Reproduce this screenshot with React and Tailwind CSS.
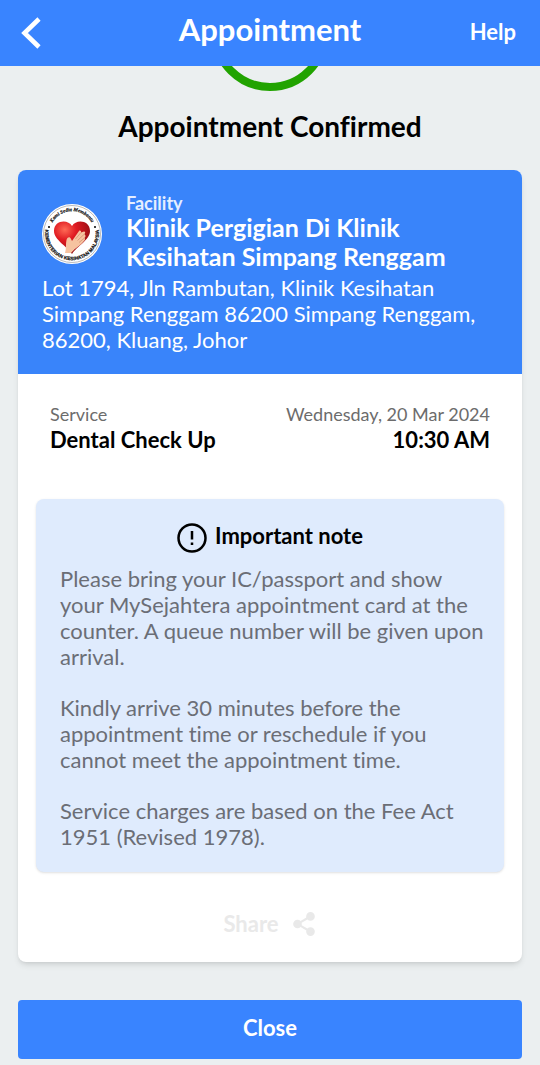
import { Share2 } from "lucide-react";

const notes = [
  "Please bring your IC/passport and show your MySejahtera appointment card at the counter. A queue number will be given upon arrival.",
  "Kindly arrive 30 minutes before the appointment time or reschedule if you cannot meet the appointment time.",
  "Service charges are based on the Fee Act 1951 (Revised 1978).",
];

function Logo() {
  return (
    <svg viewBox="0 0 60 60" className="mt-1 size-15 shrink-0" role="img" aria-label="Kementerian Kesihatan Malaysia">
      <defs>
        <radialGradient id="heart" cx="0.3" cy="0.25" r="0.9">
          <stop offset="0" stopColor="#ff6a55" />
          <stop offset="0.35" stopColor="#e01b22" />
          <stop offset="1" stopColor="#7d0a10" />
        </radialGradient>
        <path id="top" d="M8.5 23 A22.5 22.5 0 0 1 51.5 23" />
        <path id="bottom" d="M3.5 24 A27 27 0 1 0 56.5 24" />
      </defs>
      <circle cx="30" cy="30" r="30" fill="#fff" />
      <circle cx="30" cy="30" r="28.5" fill="none" stroke="#777" strokeWidth="0.5" />
      <g fill="#111" stroke="#111" strokeWidth="0.2" fontFamily="Liberation Sans, sans-serif" fontWeight="700" textAnchor="middle">
        <text fontSize="5" fontStyle="italic" fontFamily="Liberation Serif, serif">
          <textPath href="#top" startOffset="50%">Kami Sedia Membantu</textPath>
        </text>
        <text fontSize="4.9">
          <textPath href="#bottom" startOffset="50%">KEMENTERIAN KESIHATAN MALAYSIA</textPath>
        </text>
      </g>
      <circle cx="7" cy="23" r="1.1" fill="#111" />
      <circle cx="53" cy="23" r="1.1" fill="#111" />
      <path
        d="M30 50 C25 42 12 36 12 27 C12 16 26 15 30 22 C34 15 48 16 48 27 C48 36 35 42 30 50 Z"
        fill="url(#heart)"
      />
      <path
        d="M23 49 C24.5 44 23.5 40 24.5 36 C25 33 28 32 29 35 L30 37 L37 27 C38 26 39.5 27 39 28.5 L42 27.5 C43.5 27.5 43.5 29 42.5 30 L43 31 C44 31.5 43.5 33 42.5 34 C43.5 34.5 43 36 42 37 C38 42 34 43 29 49 Z"
        fill="#f6c3a0"
      />
      <path d="M39 28.5 L33.5 35 M42.5 30 L35.5 36.5 M42.5 34 L37 38.5" fill="none" stroke="#c98263" strokeWidth="0.6" />
    </svg>
  );
}

function App() {
  return (
    <div className="min-h-screen bg-[#ebeff0] font-['Lato',sans-serif] text-black [font-variant-ligatures:none]">
      <header className="sticky top-0 z-10 grid h-[66px] grid-cols-[1fr_auto_1fr] items-center bg-[#3984ff] px-5 pb-1 text-white">
        <button aria-label="Back" className="justify-self-start pt-1">
          <svg viewBox="0 0 22 34" className="h-[34px] w-[22px]" fill="none" stroke="currentColor" strokeWidth="4.6">
            <path d="M19 3 L4.5 17 L19 31" />
          </svg>
        </button>
        <h1 className="pb-1 text-[31px] font-bold leading-9">Appointment</h1>
        <a href="#" className="mr-1 justify-self-end text-[22px] font-bold">
          Help
        </a>
      </header>

      <main className="px-[18px] pb-1.5">
        <div className="flex h-[25px] items-end justify-center overflow-hidden">
          <div className="size-[118px] shrink-0 rounded-full border-8 border-[#21a300]"></div>
        </div>

        <h2 className="mt-[17px] text-center text-[28px] font-bold leading-9">Appointment Confirmed</h2>

        <section className="mt-[26px] overflow-hidden rounded-lg bg-white shadow-md">
          <div className="bg-[#3984fa] px-6 pb-[21px] pt-[23px] text-white">
            <div className="flex items-center gap-6">
              <Logo />
              <div>
                <p className="text-lg font-bold leading-5 text-[#e4eeff]">Facility</p>
                <p className="text-[25px] font-bold leading-[29px]">
                  Klinik Pergigian Di Klinik Kesihatan Simpang Renggam
                </p>
              </div>
            </div>
            <p className="mt-1 text-[22px] leading-[26px]">
              Lot 1794, Jln Rambutan, Klinik Kesihatan Simpang Renggam 86200 Simpang Renggam, 86200, Kluang, Johor
            </p>
          </div>

          <div className="flex justify-between px-8 pt-7">
            <div>
              <p className="text-lg leading-6 text-[#6c6c6c]">Service</p>
              <p className="text-[22px] font-bold leading-7">Dental Check Up</p>
            </div>
            <div className="text-right">
              <p className="text-lg leading-6 text-[#6c6c6c]">Wednesday, 20 Mar 2024</p>
              <p className="text-[22px] font-bold leading-7">10:30 AM</p>
            </div>
          </div>

          <div className="mx-[18px] mt-[45px] rounded-lg bg-[#dfebfd] pb-[22px] pl-6 pr-4 pt-5 shadow-sm">
            <div className="mr-2 flex items-center justify-center gap-2">
              <svg viewBox="0 0 30 30" className="mt-1 size-[30px]" fill="none" stroke="currentColor" strokeWidth="2.5">
                <circle cx="15" cy="15" r="13.5" />
                <path d="M15 8 V16.5 M15 19.5 V22" />
              </svg>
              <h3 className="text-[22px] font-bold leading-8">Important note</h3>
            </div>
            <div className="mt-[13px] space-y-[25px] text-[22px] leading-[26px] text-[#6b6e76]">
              {notes.map((note) => (
                <p key={note}>{note}</p>
              ))}
            </div>
          </div>

          <button disabled className="mx-auto mb-[22px] mt-9 flex items-center gap-3 text-[22px] font-bold leading-8 text-[#e9e9e9]">
            Share
            <Share2 size={26} fill="currentColor" />
          </button>
        </section>

        <button className="mt-[38px] h-[59px] w-full rounded bg-[#3984ff] pb-1 text-[22px] font-bold text-white">
          Close
        </button>
      </main>
    </div>
  );
}

export default App;
